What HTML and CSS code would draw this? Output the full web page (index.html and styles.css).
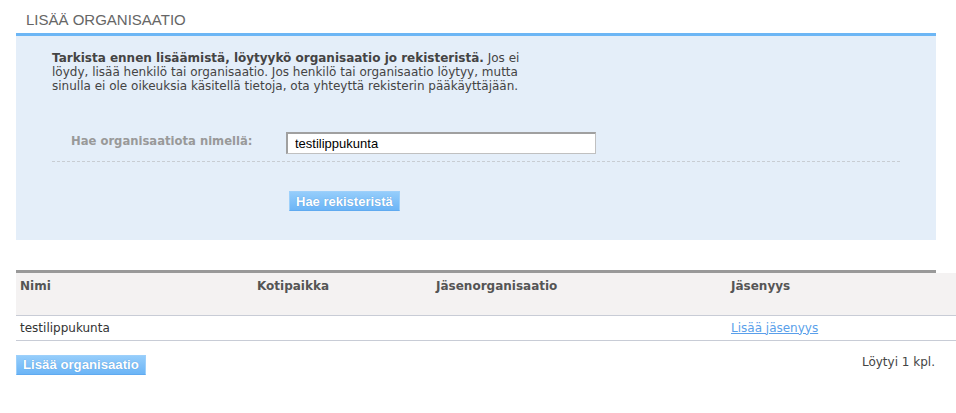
FILE: index.html
```html
<!DOCTYPE html>
<html lang="fi">
<head>
    <meta charset="UTF-8">
    <title>Lisää organisaatio</title>
    <link rel="stylesheet" href="styles.css">
</head>
<body>
    <div class="page">
        <h1 class="page-title">LISÄÄ ORGANISAATIO</h1>

        <div class="search-box">
            <p class="intro"><strong>Tarkista ennen lisäämistä, löytyykö organisaatio jo rekisteristä.</strong> Jos ei löydy, lisää henkilö tai organisaatio. Jos henkilö tai organisaatio löytyy, mutta sinulla ei ole oikeuksia käsitellä tietoja, ota yhteyttä rekisterin pääkäyttäjään.</p>

            <div class="form-row">
                <label class="form-label" for="org-name">Hae organisaatiota nimellä:</label>
                <input class="form-input" id="org-name" type="text" value="testilippukunta">
            </div>

            <div class="form-actions">
                <button class="btn">Hae rekisteristä</button>
            </div>
        </div>

        <div class="results">
            <div class="results-bar"></div>
            <table class="results-table">
                <thead>
                    <tr>
                        <th class="col-name">Nimi</th>
                        <th class="col-home">Kotipaikka</th>
                        <th class="col-member-org">Jäsenorganisaatio</th>
                        <th>Jäsenyys</th>
                    </tr>
                </thead>
                <tbody>
                    <tr>
                        <td>testilippukunta</td>
                        <td></td>
                        <td></td>
                        <td><a href="#">Lisää jäsenyys</a></td>
                    </tr>
                </tbody>
            </table>
        </div>

        <div class="results-footer">
            <button class="btn btn-wide">Lisää organisaatio</button>
            <span class="count">Löytyi 1 kpl.</span>
        </div>
    </div>
</body>
</html>
```

FILE: styles.css
```css
body {
    margin: 0;
    background-color: #ffffff;
    font-family: 'DejaVu Sans', Verdana, sans-serif;
    font-size: 12px;
    color: #444444;
}
.page {
    padding: 0 20px 0 16px;
}
.page-title {
    margin: 0;
    padding: 11px 0 0 10px;
    height: 22px;
    font-family: 'Liberation Sans', Arial, sans-serif;
    font-size: 15px;
    font-weight: normal;
    color: #666666;
}
.search-box {
    background-color: #e4eef9;
    border-top: 3px solid #6cb6f5;
    height: 204px;
    padding: 0 36px;
}
.intro {
    margin: 0;
    padding-top: 15px;
    width: 505px;
    line-height: 14px;
    color: #444444;
}
.form-row {
    display: flex;
    align-items: center;
    margin-top: 39px;
    padding: 0 0 7px 19px;
    border-bottom: 1px dashed #c8cdd3;
    width: 829px;
}
.form-label {
    width: 215px;
    font-size: 11.6px;
    font-weight: bold;
    color: #999999;
    padding-bottom: 4px;
}
.form-input {
    box-sizing: border-box;
    width: 310px;
    height: 22px;
    margin: 0;
    padding: 0 7px;
    border-style: solid;
    border-width: 2px 1px 1px 2px;
    border-color: #a0a0a0 #c0c0c0 #c0c0c0 #a0a0a0;
    background-color: #ffffff;
    font-family: 'Liberation Sans', Arial, sans-serif;
    font-size: 13px;
    color: #000000;
}
.form-actions {
    padding: 29px 0 0 237px;
}
.btn {
    height: 20px;
    padding: 0 6px;
    border: 1px solid #9dd0fb;
    border-bottom-color: #60aaf0;
    background: linear-gradient(#95cdfb, #6cb5f6);
    font-family: 'Liberation Sans', Arial, sans-serif;
    font-size: 13px;
    font-weight: bold;
    color: #ffffff;
    text-shadow: 0 0 1px #4d8fd0;
    cursor: pointer;
}
.btn-wide {
    padding: 0 6px;
    font-size: 13.2px;
}
.results {
    margin: 30px -20px 0 0;
}
.results-bar {
    width: 920px;
    height: 3px;
    background-color: #999999;
}
.results-table {
    width: 100%;
    border-collapse: collapse;
}
.results-table th {
    height: 42px;
    padding: 6px 4px 0;
    box-sizing: border-box;
    text-align: left;
    vertical-align: top;
    background-color: #f4f2f2;
    border-bottom: 1px solid #c8ccd6;
    font-weight: bold;
    color: #555555;
}
.results-table td {
    height: 24px;
    padding: 0 4px;
    border-bottom: 1px solid #c8ccd6;
    color: #333333;
}
.col-name {
    width: 237px;
}
.col-home {
    width: 179px;
}
.col-member-org {
    width: 295px;
}
.results-table a {
    color: #5a9fea;
    text-decoration: underline;
}
.results-footer {
    display: flex;
    justify-content: space-between;
    align-items: center;
    margin-top: 14px;
}
.count {
    padding-bottom: 5px;
    padding-right: 1px;
}
```
